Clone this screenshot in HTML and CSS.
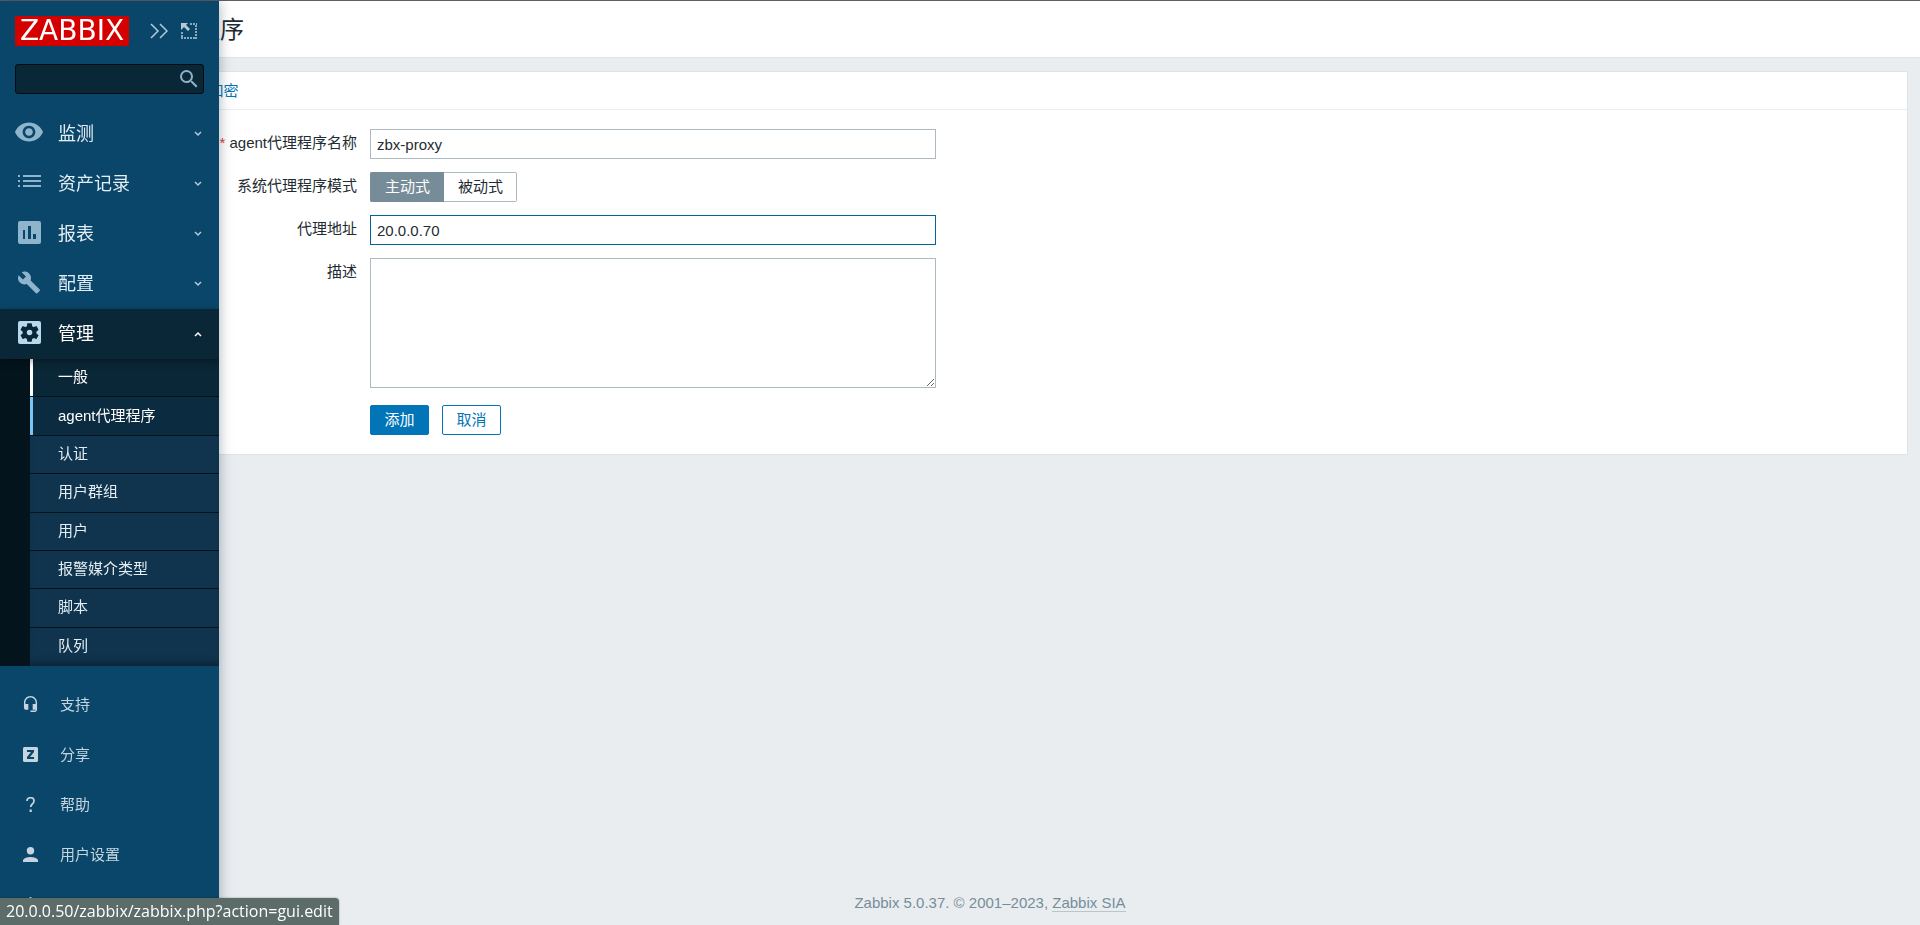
FILE: index.html
```html
<!DOCTYPE html>
<html lang="zh-CN">
<head>
    <meta charset="UTF-8">
    <meta name="viewport" content="width=device-width, initial-scale=1.0">
    <title>agent代理程序</title>
    <link rel="stylesheet" href="styles.css">
</head>
<body>
    <aside class="sidebar">
        <div class="sidebar-header">
            <a class="logo" href="#">ZABBIX</a>
            <button type="button" class="icon-button" aria-label="展开">
                <svg width="18" height="16" viewBox="0 0 18 16"><path d="M1 1l7 7-7 7M10 1l7 7-7 7" fill="none" stroke="currentColor" stroke-width="1.5"/></svg>
            </button>
            <button type="button" class="icon-button" aria-label="隐藏">
                <svg width="16" height="16" viewBox="0 0 16 16"><path d="M9 1h7M15 2v14M0 15h15M1 9v6" fill="none" stroke="currentColor" stroke-width="1.5" stroke-dasharray="2 1"/><path d="M0 0h7L5 2l4 4-2 2-4-4-3 3z" fill="currentColor"/></svg>
            </button>
        </div>

        <form class="search">
            <input type="text" aria-label="搜索">
            <button type="button" aria-label="搜索">
                <svg width="18" height="18" viewBox="3 3 18 18"><path fill="currentColor" d="M15.500 14h-.79l-.28-.27A6.471 6.471 0 0 0 16 9.500 6.500 6.500 0 1 0 9.500 16c1.610 0 3.090-.59 4.230-1.570l.27.28v.79l5 4.990L20.490 19l-4.990-5zm-6 0C7.010 14 5 11.990 5 9.500S7.010 5 9.500 5 14 7.010 14 9.500 11.990 14 9.500 14z"/></svg>
            </button>
        </form>

        <nav class="menu-main">
            <a class="menu-item" href="#">
                <svg class="menu-icon" width="28" height="28" viewBox="1 1 22 22"><path d="M12 4.500C7 4.500 2.730 7.610 1 12c1.730 4.390 6 7.500 11 7.500s9.270-3.110 11-7.500c-1.730-4.390-6-7.500-11-7.500zM12 17c-2.760 0-5-2.240-5-5s2.240-5 5-5 5 2.240 5 5-2.240 5-5 5zm0-8c-1.660 0-3 1.340-3 3s1.340 3 3 3 3-1.340 3-3-1.340-3-3-3z"/></svg>
                <span>监测</span>
                <svg class="chevron" width="8" height="6" viewBox="0 0 8 6"><path d="M1 1l3 3 3-3"/></svg>
            </a>
            <a class="menu-item" href="#">
                <svg class="menu-icon" width="28" height="24" viewBox="0 0 28 24"><path d="M3 5h2v2H3zM8 5h18v2H8zM3 10h2v2H3zM8 10h18v2H8zM3 15h2v2H3zM8 15h18v2H8z"/></svg>
                <span>资产记录</span>
                <svg class="chevron" width="8" height="6" viewBox="0 0 8 6"><path d="M1 1l3 3 3-3"/></svg>
            </a>
            <a class="menu-item" href="#">
                <svg class="menu-icon" width="28" height="23" viewBox="0 0 28 23"><path fill-rule="evenodd" d="M5 0h19a2 2 0 0 1 2 2v19a2 2 0 0 1-2 2H5a2 2 0 0 1-2-2V2a2 2 0 0 1 2-2zM8 9v9h2V9zM13 5v13h3V5zM18 13v5h3v-5z"/></svg>
                <span>报表</span>
                <svg class="chevron" width="8" height="6" viewBox="0 0 8 6"><path d="M1 1l3 3 3-3"/></svg>
            </a>
            <a class="menu-item" href="#">
                <svg class="menu-icon" width="28" height="23" viewBox="-2 1 28 22"><path d="M22.700 19l-9.100-9.100c.9-2.300.4-5-1.500-6.900-2-2-5-2.400-7.400-1.300L9 6 6 9 1.600 4.700C.4 7.100.9 10.100 2.900 12.100c1.900 1.900 4.600 2.400 6.900 1.500l9.100 9.100c.4.4 1 .4 1.400 0l2.300-2.300c.5-.4.5-1.100.1-1.400z"/></svg>
                <span>配置</span>
                <svg class="chevron" width="8" height="6" viewBox="0 0 8 6"><path d="M1 1l3 3 3-3"/></svg>
            </a>
            <a class="menu-item open" href="#">
                <svg class="menu-icon" width="28" height="23" viewBox="0 0 28 23"><rect x="3" width="23" height="23" rx="2"/><path class="gear" transform="translate(3.500 .5) scale(.92)" d="M19.430 12.980c.04-.32.07-.64.07-.98s-.03-.66-.07-.98l2.110-1.650c.19-.15.24-.42.12-.64l-2-3.460c-.12-.22-.39-.3-.61-.22l-2.490 1c-.52-.4-1.080-.73-1.690-.98l-.38-2.650A.49.49 0 0 0 14 2h-4c-.25 0-.46.18-.49.42l-.38 2.650c-.61.25-1.170.59-1.690.98l-2.490-1c-.23-.09-.49 0-.61.22l-2 3.460c-.13.22-.07.49.12.64l2.110 1.650c-.04.32-.07.65-.07.98s.03.66.07.98l-2.110 1.650c-.19.15-.24.42-.12.64l2 3.460c.12.22.39.3.61.22l2.490-1c.52.4 1.080.73 1.690.98l.38 2.650c.03.24.24.42.49.42h4c.25 0 .46-.18.49-.42l.38-2.650c.61-.25 1.170-.59 1.690-.98l2.490 1c.23.09.49 0 .61-.22l2-3.460c.12-.22.07-.49-.12-.64l-2.110-1.650zM12 15a3 3 0 1 1 0-6 3 3 0 0 1 0 6z"/></svg>
                <span>管理</span>
                <svg class="chevron" width="8" height="6" viewBox="0 0 8 6"><path d="M1 5l3-3 3 3"/></svg>
            </a>
            <div class="submenu">
                <a class="hover" href="#">一般</a>
                <a class="selected" href="#">agent代理程序</a>
                <a href="#">认证</a>
                <a href="#">用户群组</a>
                <a href="#">用户</a>
                <a href="#">报警媒介类型</a>
                <a href="#">脚本</a>
                <a href="#">队列</a>
            </div>
        </nav>

        <nav class="menu-user">
            <a href="#">
                <svg width="15" height="16" viewBox="2 1 20 22"><path d="M12 1c-4.970 0-9 4.030-9 9v7c0 1.660 1.340 3 3 3h3v-8H5v-2c0-3.870 3.130-7 7-7s7 3.130 7 7v2h-4v8h4v1h-7v2h6c1.660 0 3-1.340 3-3V10c0-4.970-4.030-9-9-9z"/></svg>
                <span>支持</span>
            </a>
            <a href="#">
                <svg width="15" height="15" viewBox="0 0 15 15"><path fill-rule="evenodd" d="M1 0h13l1 1v13l-1 1H1l-1-1V1zM4 3v2h4l-4 5v2h7v-2H7l4-5V3z"/></svg>
                <span>分享</span>
            </a>
            <a href="#">
                <svg width="15" height="15" viewBox="0 0 15 15"><path d="M4 4c0-2 1-3.300 3.600-3.300S11 2 11 4c0 3-3.300 3-3.300 6" fill="none" stroke="currentColor" stroke-width="1.700"/><path d="M6.600 12.500h2.200V15H6.600z"/></svg>
                <span>帮助</span>
            </a>
            <a href="#">
                <svg width="15" height="15" viewBox="0 0 15 15"><circle cx="7.500" cy="3.700" r="3.700"/><path d="M0 15v-2c1-2 4-3 7.500-3s6.500 1 7.500 3v2z"/></svg>
                <span>用户设置</span>
            </a>
            <a href="#" aria-label="退出">
                <svg width="15" height="15" viewBox="0 0 15 15"><path d="M6.500 0h2v8h-2z"/><path d="M4 3a6 6 0 1 0 7 0" fill="none" stroke="currentColor" stroke-width="2"/></svg>
            </a>
        </nav>
    </aside>

    <div class="wrapper">
        <header class="page-header">
            <h1>agent代理程序</h1>
        </header>

        <main>
            <form class="card">
                <div class="tabs">
                    <a class="active" href="#">agent代理程序</a>
                    <a href="#">加密</a>
                </div>
                <div class="form-grid">
                    <label class="required" for="host">agent代理程序名称</label>
                    <input type="text" id="host" value="zbx-proxy">

                    <span class="label" id="modeLabel">系统代理程序模式</span>
                    <div class="radio-segmented" role="radiogroup" aria-labelledby="modeLabel">
                        <input type="radio" name="mode" id="modeActive" checked>
                        <label for="modeActive">主动式</label>
                        <input type="radio" name="mode" id="modePassive">
                        <label for="modePassive">被动式</label>
                    </div>

                    <label for="address">代理地址</label>
                    <input type="text" id="address" class="focused" value="20.0.0.70">

                    <label for="description">描述</label>
                    <textarea id="description"></textarea>

                    <div class="form-buttons">
                        <button type="button" class="btn">添加</button>
                        <button type="button" class="btn btn-alt">取消</button>
                    </div>
                </div>
            </form>
        </main>

        <footer>Zabbix 5.0.37. © 2001–2023, <a href="#">Zabbix SIA</a></footer>
    </div>

    <div class="status-bar">20.0.0.50/zabbix/zabbix.php?action=gui.edit</div>
</body>
</html>
```
FILE: styles.css
```css
* {
    box-sizing: border-box;
}

body {
    margin: 0;
    height: 100vh;
    overflow: hidden;
    border-top: 1px solid #5f6066;
    background: #e9edf0;
    color: #1f2c33;
    font-family: "Liberation Sans", Arial, "Noto Sans CJK SC", sans-serif;
    font-size: 15px;
    line-height: 20px;
}

a {
    color: inherit;
    text-decoration: none;
}

button,
input,
textarea {
    font: inherit;
}

/* sidebar */
.sidebar {
    position: fixed;
    top: 1px;
    bottom: 0;
    left: 0;
    z-index: 10;
    width: 219px;
    overflow: hidden;
    background: #0a466a;
    box-shadow: 0 0 12px rgba(0, 30, 50, 0.35);
}

.sidebar-header {
    display: flex;
    align-items: center;
    height: 63px;
    padding: 0 0 4px 15px;
}

.logo {
    flex: none;
    width: 114px;
    height: 30px;
    margin-right: 21px;
    background: #d40000;
    color: #fff;
    font-family: "DejaVu Sans", Verdana, sans-serif;
    font-size: 28px;
    line-height: 30px;
    text-align: center;
}

.icon-button {
    display: flex;
    margin-right: 13px;
    padding: 0;
    border: 0;
    background: none;
    color: #b5cbd8;
}

.search {
    display: flex;
    align-items: center;
    height: 30px;
    margin: 0 15px 15px;
    border: 1px solid #020c12;
    border-radius: 3px;
    background: #0a2737;
}

.search input {
    flex: 1;
    min-width: 0;
    height: 28px;
    padding: 0 8px;
    border: 0;
    outline: 0;
    background: none;
    color: #fff;
}

.search button {
    display: flex;
    margin-right: 5px;
    padding: 0;
    border: 0;
    background: none;
    color: #8fb1c7;
}

.menu-item {
    display: flex;
    align-items: center;
    height: 50px;
    padding: 0 17px 0 15px;
    color: #e3edf3;
    font-size: 18px;
}

.menu-item span {
    flex: 1;
}

.menu-icon {
    margin: 0 15px 4px 0;
    fill: #8fb5cd;
}

.chevron {
    fill: none;
    stroke: #b5cbd8;
    stroke-width: 1.5;
}

.menu-item.open {
    position: relative;
    background: #0a2737;
    box-shadow: 0 2px 8px rgba(0, 0, 0, 0.4);
    color: #fff;
}

.open .menu-icon {
    fill: #b8d8ec;
}

.open .gear {
    fill: #0a2737;
}

.open .chevron {
    stroke: #fff;
}

.submenu {
    display: flex;
    flex-direction: column;
    height: 307px;
    border-left: 30px solid #04141d;
    background: #10344d;
    box-shadow: inset 0 -8px 8px -6px rgba(0, 0, 0, 0.4);
}

.submenu a {
    display: flex;
    flex: 1;
    align-items: center;
    padding: 0 0 2px 28px;
    box-shadow: inset 0 -1px #04141d;
    color: #e3edf3;
}

.submenu a:last-child {
    box-shadow: none;
}

.submenu a.hover {
    background: #0a2737;
    box-shadow: inset 0 -1px #04141d, inset 3px 0 #fff;
    color: #fff;
}

.submenu a.selected {
    background: #0b2c40;
    box-shadow: inset 0 -1px #04141d, inset 3px 0 #7dc4f5;
    color: #fff;
}

.menu-user {
    padding-top: 14px;
}

.menu-user a {
    display: flex;
    align-items: center;
    gap: 22px;
    height: 50px;
    padding-left: 23px;
    color: #c5d5df;
}

.menu-user svg {
    margin-bottom: 2px;
    fill: currentColor;
}

/* content */
.wrapper {
    display: flex;
    flex-direction: column;
    height: 100%;
    margin-left: 60px;
}

.page-header {
    display: flex;
    align-items: center;
    height: 57px;
    padding: 2px 28px 0;
    border-bottom: 1px solid #dfe4e7;
    background: #fff;
}

h1 {
    margin: 0;
    font-size: 24px;
    font-weight: normal;
    line-height: 30px;
}

main {
    flex: 1;
    padding: 13px 12px 0;
}

.card {
    border: 1px solid #dfe4e7;
    background: #fff;
}

.tabs {
    display: flex;
    align-items: center;
    gap: 25px;
    height: 38px;
    padding: 0 13px;
    border-bottom: 1px solid #ebeef0;
    color: #0275b8;
}

.tabs .active {
    color: #1f2c33;
}

.form-grid {
    display: grid;
    grid-template-columns: 271px minmax(0, 566px);
    gap: 13px;
    padding: 19px 13px;
}

.form-grid > label,
.form-grid > .label {
    padding-top: 4px;
    text-align: right;
}

.required::before {
    content: "* ";
    color: #e33734;
}

.form-grid input[type="text"],
textarea {
    height: 30px;
    padding: 0 6px;
    border: 1px solid #acbbc2;
    border-radius: 0;
    outline: 0;
    background: #fff;
    color: #1f2c33;
}

.form-grid input.focused {
    border-color: #006699;
}

.form-grid textarea {
    display: block;
    height: 130px;
    resize: vertical;
}

.radio-segmented {
    display: flex;
    justify-self: start;
    height: 30px;
}

.radio-segmented input {
    position: absolute;
    opacity: 0;
}

.radio-segmented label {
    padding: 4px 14px;
    border: 1px solid #acbbc2;
}

.radio-segmented label:first-of-type {
    border-right: 0;
    border-radius: 2px 0 0 2px;
}

.radio-segmented label:last-of-type {
    padding-right: 13px;
    border-left: 0;
    border-radius: 0 2px 2px 0;
}

.radio-segmented input:checked + label {
    border-color: #768d99;
    background: #768d99;
    color: #fff;
}

.form-buttons {
    display: flex;
    grid-column: 2;
    gap: 13px;
    margin-top: 4px;
}

.btn {
    min-width: 59px;
    height: 30px;
    padding: 0 13px;
    border: 1px solid #0275b8;
    border-radius: 2px;
    background: #0275b8;
    color: #fff;
}

.btn-alt {
    background: #fff;
    color: #0275b8;
}

footer {
    padding: 12px 0;
    color: #768d99;
    text-align: center;
}

footer a {
    border-bottom: 1px solid #bac6cc;
}

/* link preview */
.status-bar {
    position: fixed;
    bottom: 0;
    left: 0;
    z-index: 20;
    padding: 3px 6px 4px;
    border-radius: 0 4px 0 0;
    background: #5c6c69;
    box-shadow: 0 0 2px rgba(0, 0, 0, 0.4);
    color: #fff;
    font-family: "Open Sans", "Noto Sans", sans-serif;
    font-size: 16px;
}
```
